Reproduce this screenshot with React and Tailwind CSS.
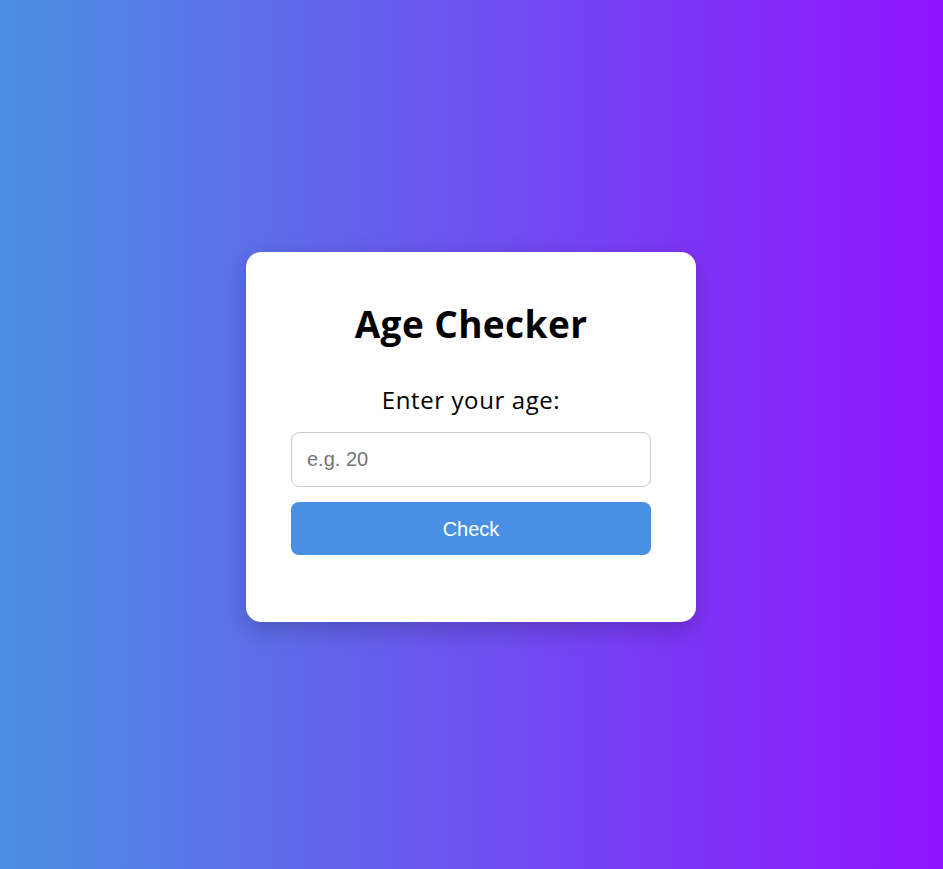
export default function App() {
  return (
    <div className="min-h-screen w-full flex items-center justify-center pt-[5px] pr-[1px] bg-[linear-gradient(to_right,#4a90e2,#9013fe)] font-['Open_Sans',sans-serif]">
      <div className="w-[450px] bg-white rounded-[15px] shadow-[0_8px_24px_rgba(0,0,0,0.2)] px-[45px] pt-[48px] pb-[67px] flex flex-col items-center">
        <h2 className="h-[48px] leading-[48px] text-[37px] font-bold tracking-[0.4px] text-black">Age Checker</h2>
        <label className="mt-[35px] h-[33px] leading-[33px] text-[24px] tracking-[0.6px] text-black">Enter your age:</label>
        <input
          type="number"
          placeholder="e.g. 20"
          className="mt-[16px] w-full h-[55px] px-[15px] border border-[#ccc] rounded-lg text-[20px] font-['Liberation_Sans',Arial,sans-serif] placeholder:text-[#757575] outline-none"
        />
        <button className="mt-[15px] w-full h-[53px] bg-[#4a90e2] rounded-lg text-white text-[20px] font-['Liberation_Sans',Arial,sans-serif]">
          Check
        </button>
      </div>
    </div>
  );
}
